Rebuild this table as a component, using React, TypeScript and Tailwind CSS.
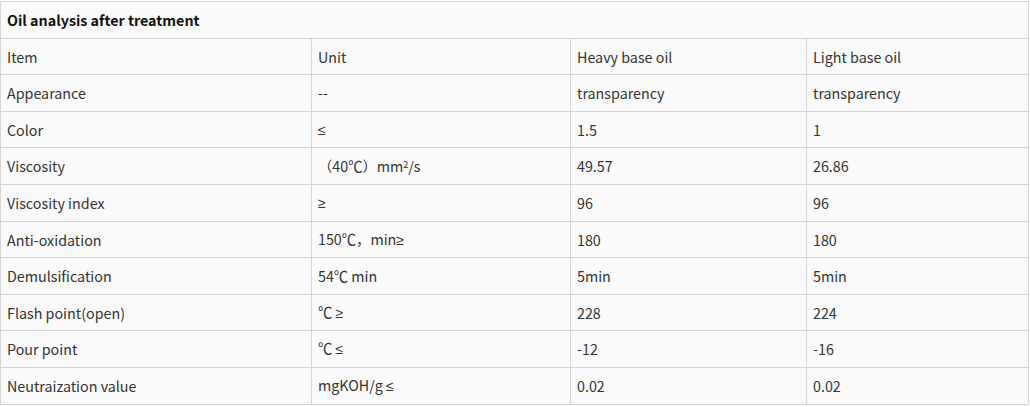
import React from 'react';

const Sym = ({ c }: { c: string }) => (
  <span className="[font-family:'Liberation_Sans',sans-serif]">{c}</span>
);

const rows: [string, React.ReactNode, string, string][] = [
  ['Appearance', '--', 'transparency', 'transparency'],
  ['Color', <Sym c="≤" />, '1.5', '1'],
  ['Viscosity', <>（40℃）mm<sup className="text-[9px]">2</sup>/s</>, '49.57', '26.86'],
  ['Viscosity index', <Sym c="≥" />, '96', '96'],
  ['Anti-oxidation', <>150℃，min<Sym c="≥" /></>, '180', '180'],
  ['Demulsification', '54℃ min', '5min', '5min'],
  ['Flash point(open)', <>℃ <Sym c="≥" /></>, '228', '224'],
  ['Pour point', <>℃ <Sym c="≤" /></>, '-12', '-16'],
  ['Neutraization value', <>mgKOH/g <Sym c="≤" /></>, '0.02', '0.02'],
];

const cell = 'border border-[#d4d4d4] px-[6px] h-[36.6px] align-middle text-left';

export default function App() {
  return (
    <div className="bg-white pt-px w-[1030px] h-[407px] overflow-hidden text-[14.3px] text-[#333] [font-family:'Noto_Sans_CJK_SC','Noto_Sans',sans-serif]">
      <table className="border-collapse w-[1028px] table-fixed bg-[#fafafa]">
        <colgroup>
          <col className="w-[311px]" />
          <col className="w-[259px]" />
          <col className="w-[236px]" />
          <col className="w-[222px]" />
        </colgroup>
        <tbody>
          <tr>
            <td colSpan={4} className={`${cell} font-bold text-[#111]`}>
              Oil analysis after treatment
            </td>
          </tr>
          <tr>
            <td className={cell}>Item</td>
            <td className={cell}>Unit</td>
            <td className={cell}>Heavy base oil</td>
            <td className={cell}>Light base oil</td>
          </tr>
          {rows.map((r, i) => (
            <tr key={i}>
              <td className={cell}>{r[0]}</td>
              <td className={cell}>{r[1]}</td>
              <td className={cell}>{r[2]}</td>
              <td className={cell}>{r[3]}</td>
            </tr>
          ))}
        </tbody>
      </table>
    </div>
  );
}
